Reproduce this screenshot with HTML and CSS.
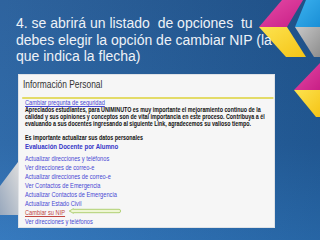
FILE: index.html
```html
<!DOCTYPE html>
<html lang="es">
<head>
<meta charset="utf-8">
<title>Cambiar NIP</title>
<link rel="stylesheet" href="styles.css">
</head>
<body>
<div class="slide">
  <svg class="deco" width="320" height="240" viewBox="0 0 320 240" aria-hidden="true">
    <defs>
      <linearGradient id="gPink" x1="0" y1="0" x2="1" y2="1">
        <stop offset="0" stop-color="#e54aa6"/>
        <stop offset="1" stop-color="#c81f86"/>
      </linearGradient>
      <linearGradient id="gYel" x1="0" y1="0" x2="1" y2="1">
        <stop offset="0" stop-color="#fde350"/>
        <stop offset="1" stop-color="#f5c416"/>
      </linearGradient>
      <linearGradient id="gCyan" x1="0" y1="0" x2="1" y2="1">
        <stop offset="0" stop-color="#3cb2ef"/>
        <stop offset="1" stop-color="#1a8fd6"/>
      </linearGradient>
      <linearGradient id="gGray" x1="0" y1="0" x2="1" y2="1">
        <stop offset="0" stop-color="#c8c8c8"/>
        <stop offset="1" stop-color="#8e8e8e"/>
      </linearGradient>
      <linearGradient id="gLeft" x1="1" y1="0" x2="0" y2="1">
        <stop offset="0" stop-color="#dcdcdc"/>
        <stop offset="1" stop-color="#98a8bd"/>
      </linearGradient>
    </defs>
    <polygon points="282,0 303,0 287,27 259,27" fill="url(#gPink)"/>
    <polygon points="259,27 287,27 306,57 286,57" fill="url(#gYel)"/>
    <polygon points="306,0 320,0 320,27 295,27" fill="url(#gCyan)"/>
    <polygon points="295,27 320,27 320,57 314,57" fill="url(#gGray)"/>
    <polygon points="294,90 320,63 320,90" fill="url(#gPink)"/>
    <polygon points="294,90 320,90 320,117 316,117" fill="url(#gYel)"/>
    <polygon points="18,162 18,215 0,215 0,186" fill="url(#gLeft)"/>
  </svg>

  <main class="content">
    <div class="title">
      <div class="tline">4. se abrirá un listado  de opciones  tu</div>
      <div class="tline">debes elegir la opción de cambiar NIP (la</div>
      <div class="tline">que indica la flecha)</div>
    </div>

    <section class="panel">
      <div class="inner">
        <h2 class="ph">Información Personal</h2>
        <div class="pbody">
          <a class="lnk first">Cambiar pregunta de seguridad</a>
          <p class="note">Apreciados estudiantes, para UNIMINUTO es muy importante el mejoramiento continuo de la<br>calidad y sus opiniones y conceptos son de vital importancia en este proceso. Contribuya a él<br>evaluando a sus docentes ingresando al siguiente Link, agradecemos su valioso tiempo.</p>
          <p class="note imp">Es importante actualizar sus datos personales</p>
          <a class="lnk eval">Evaluación Docente por Alumno</a>
          <ul class="menu">
            <li><a class="lnk">Actualizar direcciones y teléfonos</a></li>
            <li><a class="lnk">Ver direcciones de correo-e</a></li>
            <li><a class="lnk">Actualizar direcciones de correo-e</a></li>
            <li><a class="lnk">Ver Contactos de Emergencia</a></li>
            <li><a class="lnk">Actualizar Contactos de Emergencia</a></li>
            <li><a class="lnk">Actualizar Estado Civil</a></li>
            <li><a class="lnk nip">Cambiar su NIP</a><svg class="arrow" width="66" height="6" viewBox="0 0 66 6" aria-hidden="true"><path d="M0.8,3 L6,0.7 L6,1.3 L63.2,1.3 A1.7,1.7 0 0 1 63.2,4.7 L6,4.7 L6,5.3 Z" fill="#eef6d4" stroke="#96c24a" stroke-width="0.8"/></svg></li>
            <li><a class="lnk">Ver direcciones y teléfonos</a></li>
            <li><a class="lnk">Consultar datos personales</a></li>
          </ul>
        </div>
      </div>
    </section>
  </main>
</div>
</body>
</html>
```

FILE: styles.css
```css
html, body {
  margin: 0;
  padding: 0;
}

body {
  width: 320px;
  height: 240px;
  overflow: hidden;
  font-family: "Liberation Sans", Arial, sans-serif;
}

.slide {
  position: relative;
  width: 320px;
  height: 240px;
  overflow: hidden;
  background:
    linear-gradient(to right, rgba(255, 255, 255, 0.05), rgba(0, 0, 0, 0.12)),
    linear-gradient(to bottom, #235b99 0%, #2563a5 60%, #2c73bb 100%);
}

.deco {
  position: absolute;
  left: 0;
  top: 0;
  display: block;
}

.content {
  position: relative;
  z-index: 1;
  padding: 15px 0 0 16px;
}

.title {
  color: #eef2f7;
  font-size: 14px;
  line-height: 16.5px;
}

.tline {
  white-space: pre;
}

.panel {
  box-sizing: border-box;
  width: 257px;
  height: 154px;
  margin: 9.5px 0 0 2px;
  background: #f6f6f6;
  border: 1px solid #dfe2e6;
  overflow: hidden;
}

.inner {
  width: 318.75px;
  transform: scaleX(0.8);
  transform-origin: 0 0;
}

.ph {
  margin: 0 1.25px 0 3.75px;
  padding: 3px 0 7px 1.25px;
  font-size: 10.5px;
  line-height: 12px;
  font-weight: normal;
  color: #333333;
  border-bottom: 2px solid #e3db68;
}

.pbody {
  padding: 0.4px 0 0 7.5px;
}

.lnk {
  color: #4848d4;
  font-size: 7.1px;
}

.first {
  display: block;
  line-height: 8px;
  text-decoration: underline;
}

.note {
  margin: 0;
  font-size: 6.7px;
  line-height: 6.67px;
  font-weight: bold;
  color: #111111;
  white-space: nowrap;
}

.imp {
  margin-top: 6.65px;
  line-height: 8.7px;
}

.eval {
  display: block;
  font-size: 7.6px;
  line-height: 8.7px;
  font-weight: bold;
  color: #3535c8;
}

.menu {
  list-style: none;
  margin: 0;
  padding: 0;
}

.menu li {
  line-height: 9px;
  height: 9px;
  white-space: nowrap;
}

.nip {
  color: #c0453f;
  text-decoration: underline;
}

.arrow {
  display: inline-block;
  vertical-align: middle;
  margin-left: 4px;
}
```
